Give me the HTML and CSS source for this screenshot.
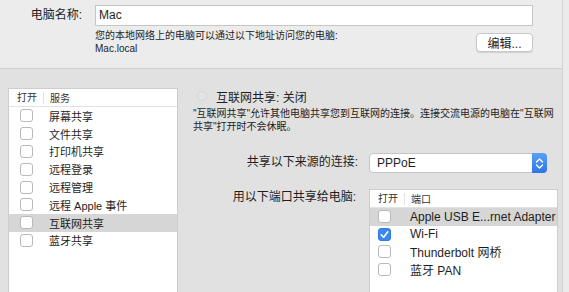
FILE: index.html
```html
<!DOCTYPE html>
<html lang="zh-CN">
<head>
  <meta charset="UTF-8" />
  <title>共享</title>
  <link rel="stylesheet" href="styles.css">
</head>
<body>
  <div class="window">
    <div class="top">
      <label class="top-label">电脑名称:</label>
      <div class="top-field">
        <div class="name-input">Mac</div>
        <div class="addr-row">
          <div class="addr-text">
            您的本地网络上的电脑可以通过以下地址访问您的电脑:<br>
            Mac.local
          </div>
          <button class="btn-edit">编辑...</button>
        </div>
      </div>
    </div>

    <div class="main">
      <div class="list services">
        <div class="list-head">
          <span class="col-on">打开</span>
          <span class="col-name">服务</span>
        </div>
        <div class="row"><span class="col-on"><span class="check"></span></span><span class="col-name">屏幕共享</span></div>
        <div class="row"><span class="col-on"><span class="check"></span></span><span class="col-name">文件共享</span></div>
        <div class="row"><span class="col-on"><span class="check"></span></span><span class="col-name">打印机共享</span></div>
        <div class="row"><span class="col-on"><span class="check"></span></span><span class="col-name">远程登录</span></div>
        <div class="row"><span class="col-on"><span class="check"></span></span><span class="col-name">远程管理</span></div>
        <div class="row"><span class="col-on"><span class="check"></span></span><span class="col-name">远程 Apple 事件</span></div>
        <div class="row selected"><span class="col-on"><span class="check"></span></span><span class="col-name">互联网共享</span></div>
        <div class="row"><span class="col-on"><span class="check"></span></span><span class="col-name">蓝牙共享</span></div>
      </div>

      <div class="pane">
        <div class="status">
          <span class="dot"></span>
          <span>互联网共享: 关闭</span>
        </div>
        <p class="desc">"互联网共享"允许其他电脑共享您到互联网的连接。连接交流电源的电脑在"互联网<br>共享"打开时不会休眠。</p>

        <div class="form">
          <span class="form-label">共享以下来源的连接:</span>
          <div class="popup">
            <span>PPPoE</span>
            <span class="stepper">
              <svg width="15" height="19" viewBox="0 0 15 19">
                <path d="M4.5 8 L7.5 5 L10.5 8" fill="none" stroke="#fff" stroke-width="1.4" stroke-linecap="round" stroke-linejoin="round"/>
                <path d="M4.5 11 L7.5 14 L10.5 11" fill="none" stroke="#fff" stroke-width="1.4" stroke-linecap="round" stroke-linejoin="round"/>
              </svg>
            </span>
          </div>

          <span class="form-label second">用以下端口共享给电脑:</span>
          <div class="list ports">
            <div class="list-head">
              <span class="col-on">打开</span>
              <span class="col-name">端口</span>
            </div>
            <div class="row selected"><span class="col-on"><span class="check"></span></span><span class="col-name">Apple USB E...rnet Adapter</span></div>
            <div class="row"><span class="col-on"><span class="check on">
              <svg width="13" height="13" viewBox="0 0 13 13"><path d="M3.2 6.8 L5.6 9.2 L9.8 3.8" fill="none" stroke="#fff" stroke-width="1.6" stroke-linecap="round" stroke-linejoin="round"/></svg>
            </span></span><span class="col-name">Wi-Fi</span></div>
            <div class="row"><span class="col-on"><span class="check"></span></span><span class="col-name">Thunderbolt 网桥</span></div>
            <div class="row"><span class="col-on"><span class="check"></span></span><span class="col-name">蓝牙 PAN</span></div>
          </div>
        </div>
      </div>
    </div>
  </div>
</body>
</html>
```

FILE: styles.css
```css
body {
  margin: 0;
  background: #ebebeb;
  font-family: "Liberation Sans", "Noto Sans CJK SC", sans-serif;
  color: #1e1e1e;
  overflow: hidden;
}

.window {
  width: 563px;
  height: 292px;
  overflow: hidden;
  border-right: 1px solid #d2d2d2;
  box-sizing: border-box;
  background: #e1e1e1;
}

/* top: computer name */
.top {
  height: 69px;
  box-sizing: border-box;
  background: #ececec;
  border-bottom: 1px solid #d0d0d0;
  display: grid;
  grid-template-columns: 95px 438px;
  padding-top: 5px;
}

.top-label {
  font-size: 12px;
  line-height: 21px;
  text-align: right;
  padding-right: 13px;
}

.name-input {
  height: 21px;
  box-sizing: border-box;
  background: #fff;
  border: 1px solid #c6c6c6;
  font-size: 12px;
  line-height: 19px;
  padding-left: 3px;
}

.addr-row {
  display: flex;
  justify-content: space-between;
  align-items: flex-start;
  margin-top: 3px;
}

.addr-text {
  font-size: 10px;
  line-height: 13px;
}

.btn-edit {
  width: 57px;
  height: 19px;
  margin-top: 4px;
  padding: 0;
  background: #fff;
  border: 1px solid #c8c8c8;
  border-radius: 4px;
  box-shadow: 0 1px 1px rgba(0,0,0,0.12);
  font-family: inherit;
  font-size: 12px;
  color: #1e1e1e;
}

/* lower area */
.main {
  display: flex;
  align-items: flex-start;
}

.list {
  background: #fff;
  border: 1px solid #cdcdcd;
  border-bottom: none;
  box-sizing: border-box;
}

.services {
  width: 170px;
  height: 204px;
  margin: 19px 0 0 8px;
}

.list-head {
  display: flex;
  height: 18px;
  align-items: center;
  border-bottom: 1px solid #e2e2e2;
  box-sizing: border-box;
  font-size: 10px;
  color: #333;
}

.services .list-head {
  height: 18px;
}

.list-head .col-on {
  border-right: 1px solid #e2e2e2;
  height: 12px;
  line-height: 12px;
}

.row {
  display: flex;
  align-items: center;
  height: 17.8px;
  font-size: 11px;
}

.row.selected {
  background: #d6d6d6;
}

.col-on {
  width: 26px;
  padding-left: 8px;
  flex-shrink: 0;
  display: flex;
  align-items: center;
}

.col-name {
  padding-left: 6px;
  white-space: nowrap;
}

.services .row .col-on {
  padding-left: 11px;
  width: 23px;
}

.check {
  width: 13px;
  height: 13px;
  box-sizing: border-box;
  background: #fff;
  border: 1px solid #b9b9b9;
  border-radius: 3px;
  display: block;
}

.check.on {
  background: #3b88f4;
  border-color: #3479e0;
}

.check svg {
  display: block;
  margin: -1px;
}

/* right pane */
.pane {
  padding: 19px 0 0 15px;
  flex: 1;
}

.status {
  display: flex;
  align-items: center;
  height: 16px;
  font-size: 12px;
}

.dot {
  width: 8px;
  height: 8px;
  border-radius: 50%;
  background: #e4e4e4;
  border: 1px solid #d6d6d6;
  margin: 0 9px 0 4px;
}

.desc {
  margin: 3px 0 0;
  font-size: 10px;
  line-height: 13px;
  white-space: nowrap;
}

.form {
  display: grid;
  grid-template-columns: 174px 178px;
  column-gap: 11px;
  row-gap: 16px;
  margin-top: 20px;
  margin-left: -9px;
}

.form-label {
  font-size: 12px;
  line-height: 19px;
  text-align: right;
}

.form-label.second {
  margin-top: -1px;
  padding-right: 2px;
}

.popup {
  height: 20px;
  box-sizing: border-box;
  background: #fff;
  border: 1px solid #c4c4c4;
  border-radius: 4px;
  display: flex;
  justify-content: space-between;
  align-items: center;
  padding-left: 7px;
  font-size: 12px;
}

.stepper {
  width: 15px;
  height: 20px;
  margin-right: -1px;
  background: linear-gradient(#5aa0f7, #2f74e8);
  border-radius: 0 4px 4px 0;
  display: flex;
  align-items: center;
}

.ports {
  width: 189px;
  height: 104px;
}

.ports .row {
  height: 17.5px;
  font-size: 12px;
}
```
